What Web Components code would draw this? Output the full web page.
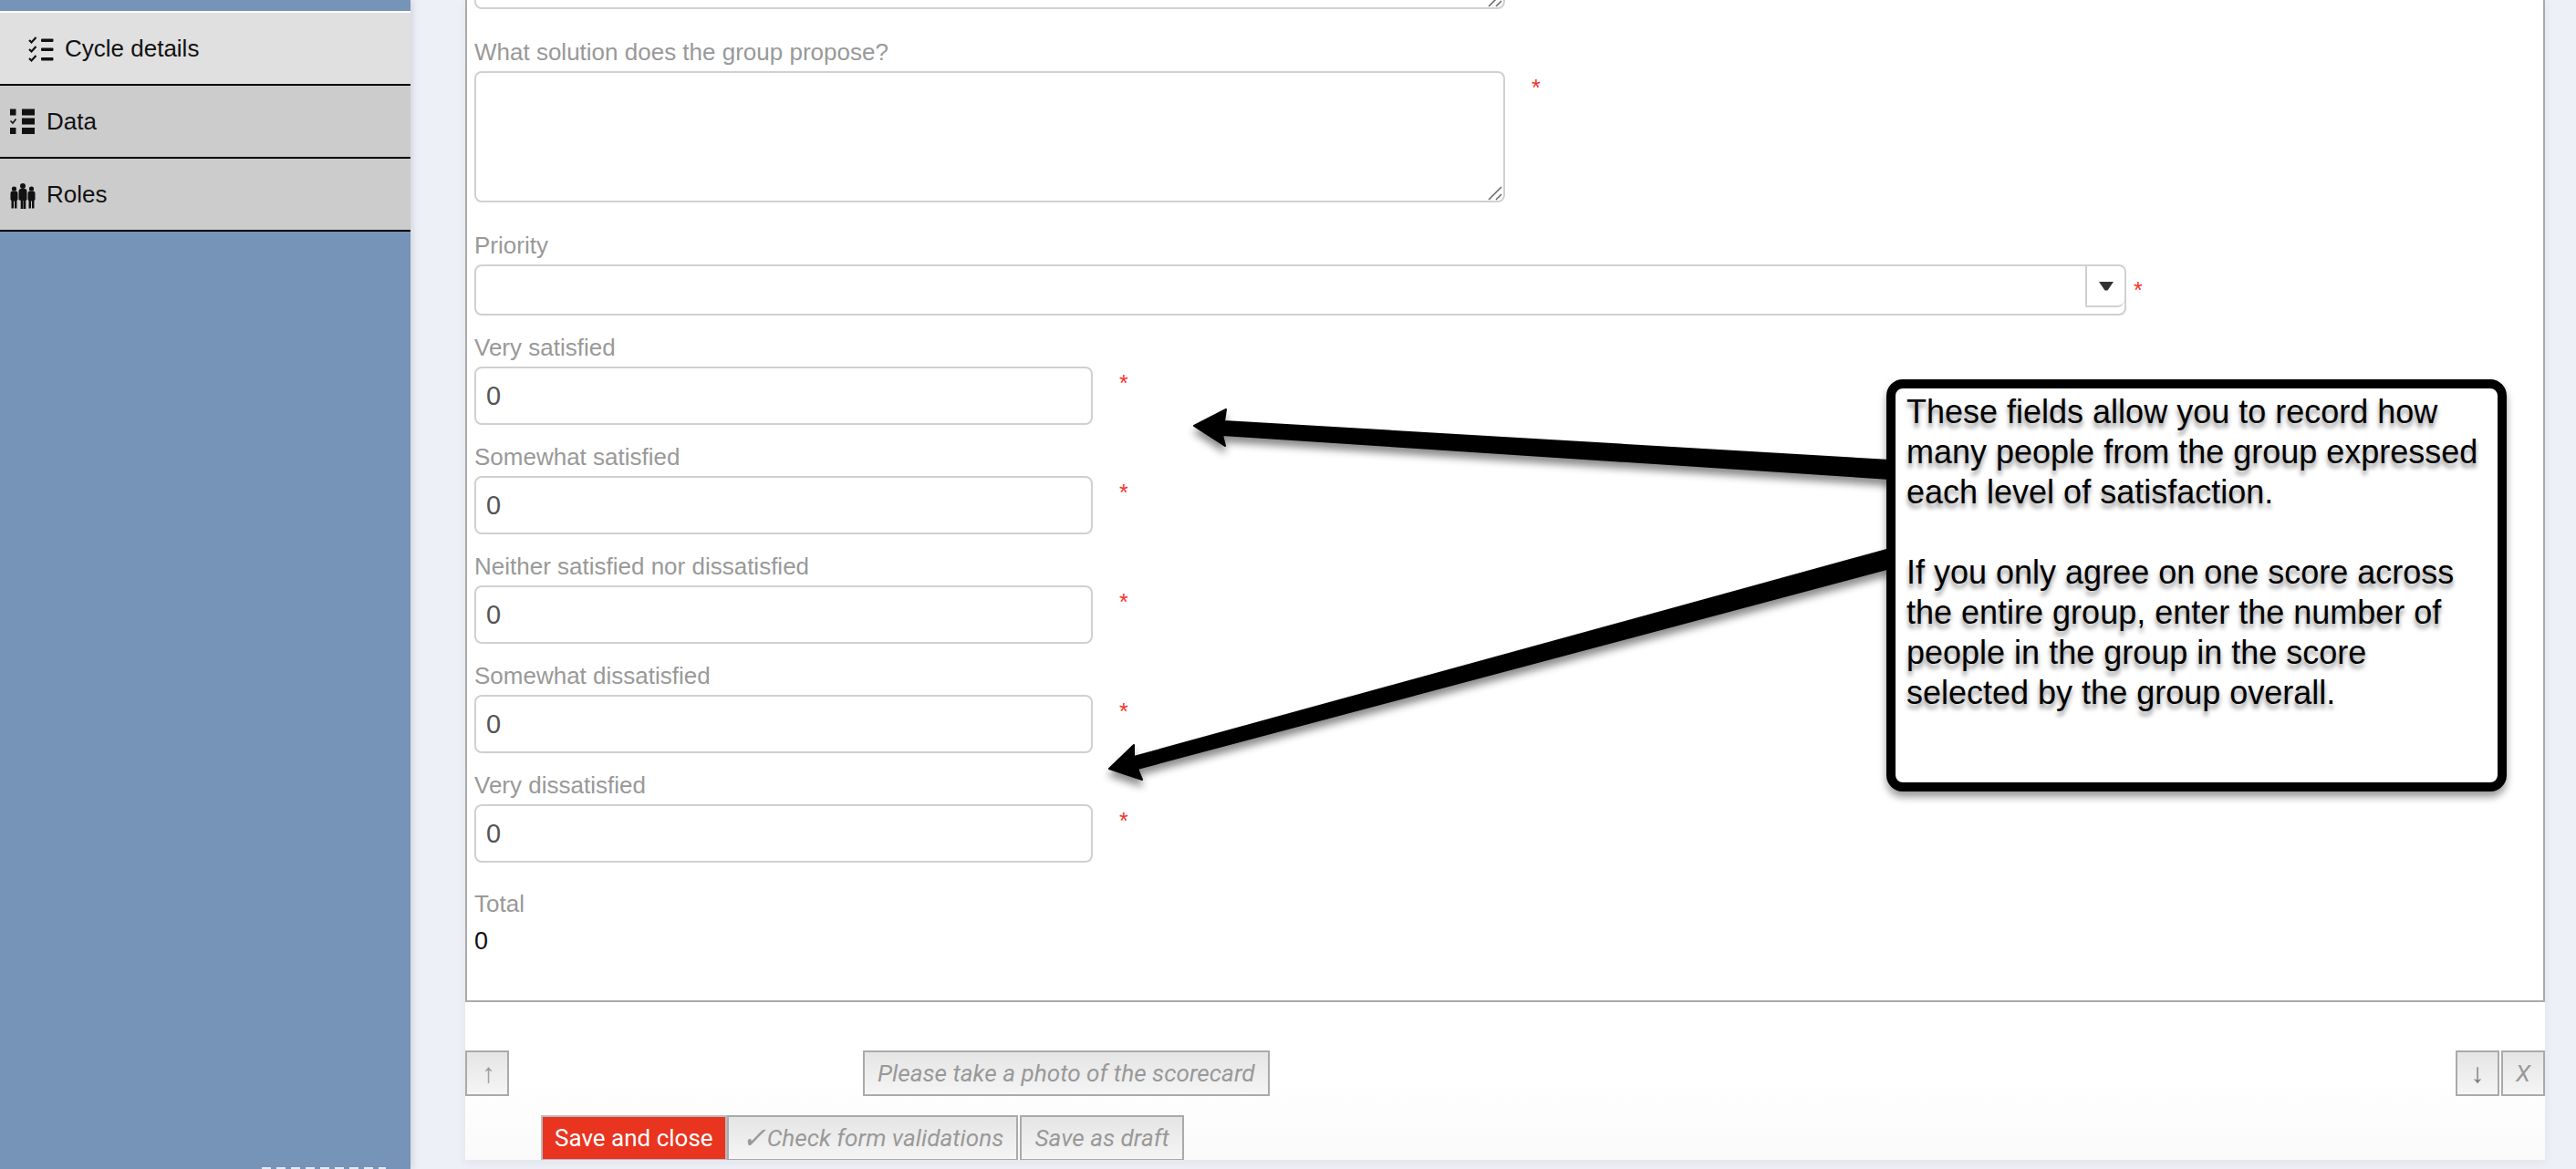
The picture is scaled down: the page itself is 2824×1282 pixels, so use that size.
<!DOCTYPE html>
<html lang="en">
<head>
<meta charset="utf-8">
<title>Scorecard form</title>
<style>
  html, body { margin: 0; height: 100%; overflow: hidden; }
  body { background: #edf0f6; font-family: 'Liberation Sans', Arial, sans-serif; }
  svg.ic { display: block; width: 28px; height: 28px; fill: #111; overflow: visible; }
  svg.ic polyline { fill: none; stroke: #111; stroke-width: 2.2; }
  .tick { font-size: 32px; font-style: italic; line-height: 1; margin-right: 1px; }
</style>
</head>
<body>

<app-shell>
  <side-nav slot="nav">
    <nav-item active>
      <svg class="ic" slot="icon" viewBox="0 0 28 28">
        <polyline points="1,5 3.500,7.500 8.500,2"/>
        <polyline points="1,15 3.500,17.500 8.500,12"/>
        <polyline points="1,25 3.500,27.500 8.500,22"/>
        <rect x="14" y="3.500" width="13.500" height="3.500" rx="1"/>
        <rect x="14" y="13.500" width="13.500" height="3.500" rx="1"/>
        <rect x="14" y="24" width="13.500" height="3.500" rx="1"/>
      </svg>
      Cycle details
    </nav-item>
    <nav-item>
      <svg class="ic" slot="icon" viewBox="0 0 28 28">
        <rect x="0" y="0.500" width="6.500" height="7"/>
        <polyline points="0.500,13.500 3,16 6.500,11.500" style="stroke-width:1.600"/>
        <rect x="0" y="21" width="6.500" height="7"/>
        <rect x="13" y="0.500" width="14" height="7"/>
        <rect x="13" y="10.500" width="14" height="7"/>
        <rect x="13" y="21" width="14" height="7"/>
      </svg>
      Data
    </nav-item>
    <nav-item>
      <svg class="ic" slot="icon" viewBox="0 -2 28 28">
        <circle cx="4.500" cy="6" r="2.600"/>
        <path d="M0.500 11q0-2.500 2-2.500h4q2 0 2 2.500v7l-1 1v8.500H5v-8H4v8H1.500v-8.500l-1-1z"/>
        <circle cx="14" cy="3" r="3"/>
        <path d="M9.500 9q0-3 2.500-3h4q2.500 0 2.500 3v9l-1.200 1v9h-2.600v-9h-.4v9h-2.600v-9L9.500 18z"/>
        <circle cx="23.500" cy="6" r="2.600"/>
        <path d="M19.500 11q0-2.500 2-2.500h4q2 0 2 2.500v7l-1 1v8.500H24v-8h-1v8h-2.500v-8.500l-1-1z"/>
      </svg>
      Roles
    </nav-item>
  </side-nav>

  <form-panel slot="main">
    <form-field gap="32"><textarea-box></textarea-box></form-field>
    <form-field label="What solution does the group propose?" required gap="32" star="33" star-top="5"><textarea-box></textarea-box></form-field>
    <form-field label="Priority" required gap="20" star="12" star-top="15"><select-box></select-box></form-field>
    <form-field label="Very satisfied" required gap="20" star="33"><number-box value="0"></number-box></form-field>
    <form-field label="Somewhat satisfied" required gap="20" star="33"><number-box value="0"></number-box></form-field>
    <form-field label="Neither satisfied nor dissatisfied" required gap="20" star="33"><number-box value="0"></number-box></form-field>
    <form-field label="Somewhat dissatisfied" required gap="20" star="33"><number-box value="0"></number-box></form-field>
    <form-field label="Very dissatisfied" required gap="30" star="33"><number-box value="0"></number-box></form-field>
    <form-field label="Total" gap="0"><total-value>0</total-value></form-field>

    <action-row slot="actions" class="nav-row">
      <action-button square arrow style="padding-left:3px">&#8593;</action-button>
      <action-button style="margin-left:388px">Please take a photo of the scorecard</action-button>
      <action-button square arrow plain style="margin-left:auto">&#8595;</action-button>
      <action-button square style="margin-left:2px">X</action-button>
    </action-row>
    <action-row slot="actions" class="save-row">
      <action-button primary>Save and close</action-button>
      <action-button><span class="tick">&#10003;</span>Check form validations</action-button>
      <action-button style="margin-left:2px">Save as draft</action-button>
    </action-row>
  </form-panel>

  <annotation-layer slot="overlay">These fields allow you to record how many people from the group expressed each level of satisfaction.

If you only agree on one score across the entire group, enter the number of people in the group in the score selected by the group overall.</annotation-layer>
</app-shell>

<script>
class AppShell extends HTMLElement {
  constructor () {
    super()
    this.attachShadow({ mode: 'open' }).innerHTML = `
      <style>
        :host { display: flex; position: relative; width: 2824px; height: 1282px; overflow: hidden; background: #edf0f6; }
      </style>
      <slot name="nav"></slot>
      <slot name="main"></slot>
      <slot name="overlay"></slot>
    `
  }
}

class SideNav extends HTMLElement {
  constructor () {
    super()
    this.attachShadow({ mode: 'open' }).innerHTML = `
      <style>
        :host {
          display: flex;
          flex-direction: column;
          flex: none;
          width: 450px;
          height: 1282px;
          padding-top: 12px;
          box-sizing: border-box;
          background: #7693b8;
          box-shadow: 3px 0 6px rgba(60, 70, 90, .14);
        }
        .list { border-top: 2px solid #fff; }
        .foot {
          margin: auto 27px 0 287px;
          height: 2px;
          background: repeating-linear-gradient(90deg, #e3ebf6 0 10px, transparent 10px 16px);
        }
      </style>
      <div class="list"><slot></slot></div>
      <div class="foot"></div>
    `
  }
}

class NavItem extends HTMLElement {
  constructor () {
    super()
    this.attachShadow({ mode: 'open' }).innerHTML = `
      <style>
        :host {
          display: flex;
          align-items: center;
          gap: 12px;
          height: 78px;
          padding-left: 11px;
          background: #cccccc;
          border-bottom: 2px solid #000;
          color: #111;
          font: 26px 'Liberation Sans', Arial, sans-serif;
        }
        :host([active]) { background: #e0e0e0; padding-left: 31px; }
      </style>
      <slot name="icon"></slot>
      <slot></slot>
    `
  }
}

class FormPanel extends HTMLElement {
  constructor () {
    super()
    this.attachShadow({ mode: 'open' }).innerHTML = `
      <style>
        :host {
          display: block;
          flex: none;
          width: 2280px;
          height: 1272px;
          margin-left: 60px;
          overflow: hidden;
          background: linear-gradient(#fff 1180px, #fafafa);
          box-shadow: 0 3px 10px rgba(60, 70, 100, .07);
        }
        .fields {
          margin-top: -134px;
          height: 1233px;
          box-sizing: border-box;
          padding-left: 8px;
          border: 2px solid #aaa;
          border-top: 0;
        }
        .actions { display: block; }
      </style>
      <div class="fields"><slot></slot></div>
      <div class="actions"><slot name="actions"></slot></div>
    `
  }
}

class FormField extends HTMLElement {
  constructor () {
    super()
    this.attachShadow({ mode: 'open' })
  }

  connectedCallback () {
    const label = this.getAttribute('label')
    const gap = this.getAttribute('gap') || 20
    const star = this.getAttribute('star') || 33
    const starTop = this.getAttribute('star-top') || 5
    this.shadowRoot.innerHTML = `
      <style>
        :host { display: block; color: #999; font: 26px 'Liberation Sans', Arial, sans-serif; }
        .label { display: block; height: 30px; line-height: 30px; margin-bottom: 6px; }
        .row { display: flex; align-items: flex-start; }
        .star { color: #f5352a; font-size: 25px; line-height: 26px; height: 26px; }
      </style>
      ${label ? `<span class="label">${label}</span>` : ''}
      <div class="row" style="padding-bottom:${gap}px">
        <slot></slot>
        ${this.hasAttribute('required') ? `<span class="star" style="margin:${starTop}px 0 0 ${star - 4}px">*</span>` : ''}
      </div>
    `
  }
}

class TextareaBox extends HTMLElement {
  constructor () {
    super()
    this.attachShadow({ mode: 'open' }).innerHTML = `
      <style>
        :host { display: block; position: relative; width: 1130px; height: 144px; }
        textarea {
          display: block;
          width: 100%;
          height: 100%;
          box-sizing: border-box;
          margin: 0;
          border: 2px solid #d0d0d0;
          border-radius: 8px;
          background: #fff;
          outline: none;
          resize: none;
        }
        svg { position: absolute; right: 3px; bottom: 2px; width: 16px; height: 16px; stroke: #666; stroke-width: 1.500; fill: none; }
      </style>
      <textarea></textarea>
      <svg viewBox="0 0 16 16"><path d="M1 15L15 1M9 15l6-6"/></svg>
    `
  }
}

class SelectBox extends HTMLElement {
  constructor () {
    super()
    this.attachShadow({ mode: 'open' }).innerHTML = `
      <style>
        :host {
          display: flex;
          justify-content: flex-end;
          width: 1811px;
          height: 56px;
          box-sizing: border-box;
          border: 2px solid #d0d0d0;
          border-radius: 8px;
          background: #fff;
        }
        .drop {
          display: flex;
          align-items: center;
          justify-content: center;
          width: 41px;
          height: 43px;
          border: solid #d0d0d0;
          border-width: 0 0 2px 2px;
          border-bottom-right-radius: 8px;
        }
        svg { width: 16px; height: 10px; fill: #333; }
      </style>
      <div class="drop"><svg viewBox="0 0 16 10"><path d="M0 0h16l-6.500 9.500h-3z"/></svg></div>
    `
  }
}

class NumberBox extends HTMLElement {
  constructor () {
    super()
    this.attachShadow({ mode: 'open' })
  }

  connectedCallback () {
    this.shadowRoot.innerHTML = `
      <style>
        :host {
          display: flex;
          align-items: center;
          width: 678px;
          height: 64px;
          box-sizing: border-box;
          padding-left: 11px;
          border: 2px solid #d0d0d0;
          border-radius: 8px;
          background: #fff;
          color: #555;
          font: 29px 'Liberation Sans', Arial, sans-serif;
        }
      </style>
      <span>${this.getAttribute('value')}</span>
    `
  }
}

class TotalValue extends HTMLElement {
  constructor () {
    super()
    this.attachShadow({ mode: 'open' }).innerHTML = `
      <style>
        :host { display: block; color: #111; font: 27px/30px 'Liberation Sans', Arial, sans-serif; margin-top: 5px; }
      </style>
      <slot></slot>
    `
  }
}

class ActionRow extends HTMLElement {
  constructor () {
    super()
    this.attachShadow({ mode: 'open' }).innerHTML = `
      <style>
        :host { display: flex; }
        :host(.nav-row) { margin-top: 53px; }
        :host(.save-row) { margin-top: 21px; margin-left: 83px; }
      </style>
      <slot></slot>
    `
  }
}

class ActionButton extends HTMLElement {
  constructor () {
    super()
    this.attachShadow({ mode: 'open' }).innerHTML = `
      <style>
        :host {
          display: flex;
          align-items: center;
          justify-content: center;
          height: 50px;
          box-sizing: border-box;
          padding: 0 14px;
          border: 2px solid #aaa;
          background: linear-gradient(#e5e5e5, #f5f5f5);
          color: #999;
          font: italic 26.200px Roboto, Arial, sans-serif;
          white-space: nowrap;
        }
        :host([square]) { width: 48px; padding: 0; }
        :host([arrow]) { font: italic 30px 'Liberation Sans', Arial, sans-serif; }
        :host([plain]) { font-style: normal; color: #777; }
        :host([primary]) {
          padding: 0 13px;
          background: #e93420;
          border-color: #bbb;
          color: #fff;
          font: 26px Roboto, Arial, sans-serif;
        }
      </style>
      <slot></slot>
    `
  }
}

class AnnotationLayer extends HTMLElement {
  constructor () {
    super()
    this.attachShadow({ mode: 'open' }).innerHTML = `
      <style>
        :host { position: absolute; inset: 0; display: block; pointer-events: none; }
        svg { position: absolute; inset: 0; width: 100%; height: 100%; filter: drop-shadow(0 7px 4px rgba(0, 0, 0, .45)); }
        polygon { fill: #000; stroke: #000; stroke-width: 2; stroke-linejoin: round; }
        .note {
          position: absolute;
          left: 2068px;
          top: 416px;
          width: 680px;
          height: 452px;
          box-sizing: border-box;
          padding: 4px 12px;
          background: #fff;
          border: 10px solid #000;
          border-radius: 18px;
          box-shadow: 0 6px 8px rgba(0, 0, 0, .4);
          color: #000;
          font: 36px/44px 'Liberation Sans', Arial, sans-serif;
          text-shadow: 0 5px 5px rgba(0, 0, 0, .45);
          white-space: pre-line;
        }
      </style>
      <svg viewBox="0 0 2824 1282">
        <polygon points="2072,505 1342,462 1344,449 1309,467 1343,489 1340,477 2072,525"/>
        <polygon points="2072,602 1243,830 1243,817 1216,843 1252,855 1247,843 2072,623"/>
      </svg>
      <div class="note"><slot></slot></div>
    `
  }
}

customElements.define('app-shell', AppShell)
customElements.define('side-nav', SideNav)
customElements.define('nav-item', NavItem)
customElements.define('form-panel', FormPanel)
customElements.define('form-field', FormField)
customElements.define('textarea-box', TextareaBox)
customElements.define('select-box', SelectBox)
customElements.define('number-box', NumberBox)
customElements.define('total-value', TotalValue)
customElements.define('action-row', ActionRow)
customElements.define('action-button', ActionButton)
customElements.define('annotation-layer', AnnotationLayer)
</script>
</body>
</html>
